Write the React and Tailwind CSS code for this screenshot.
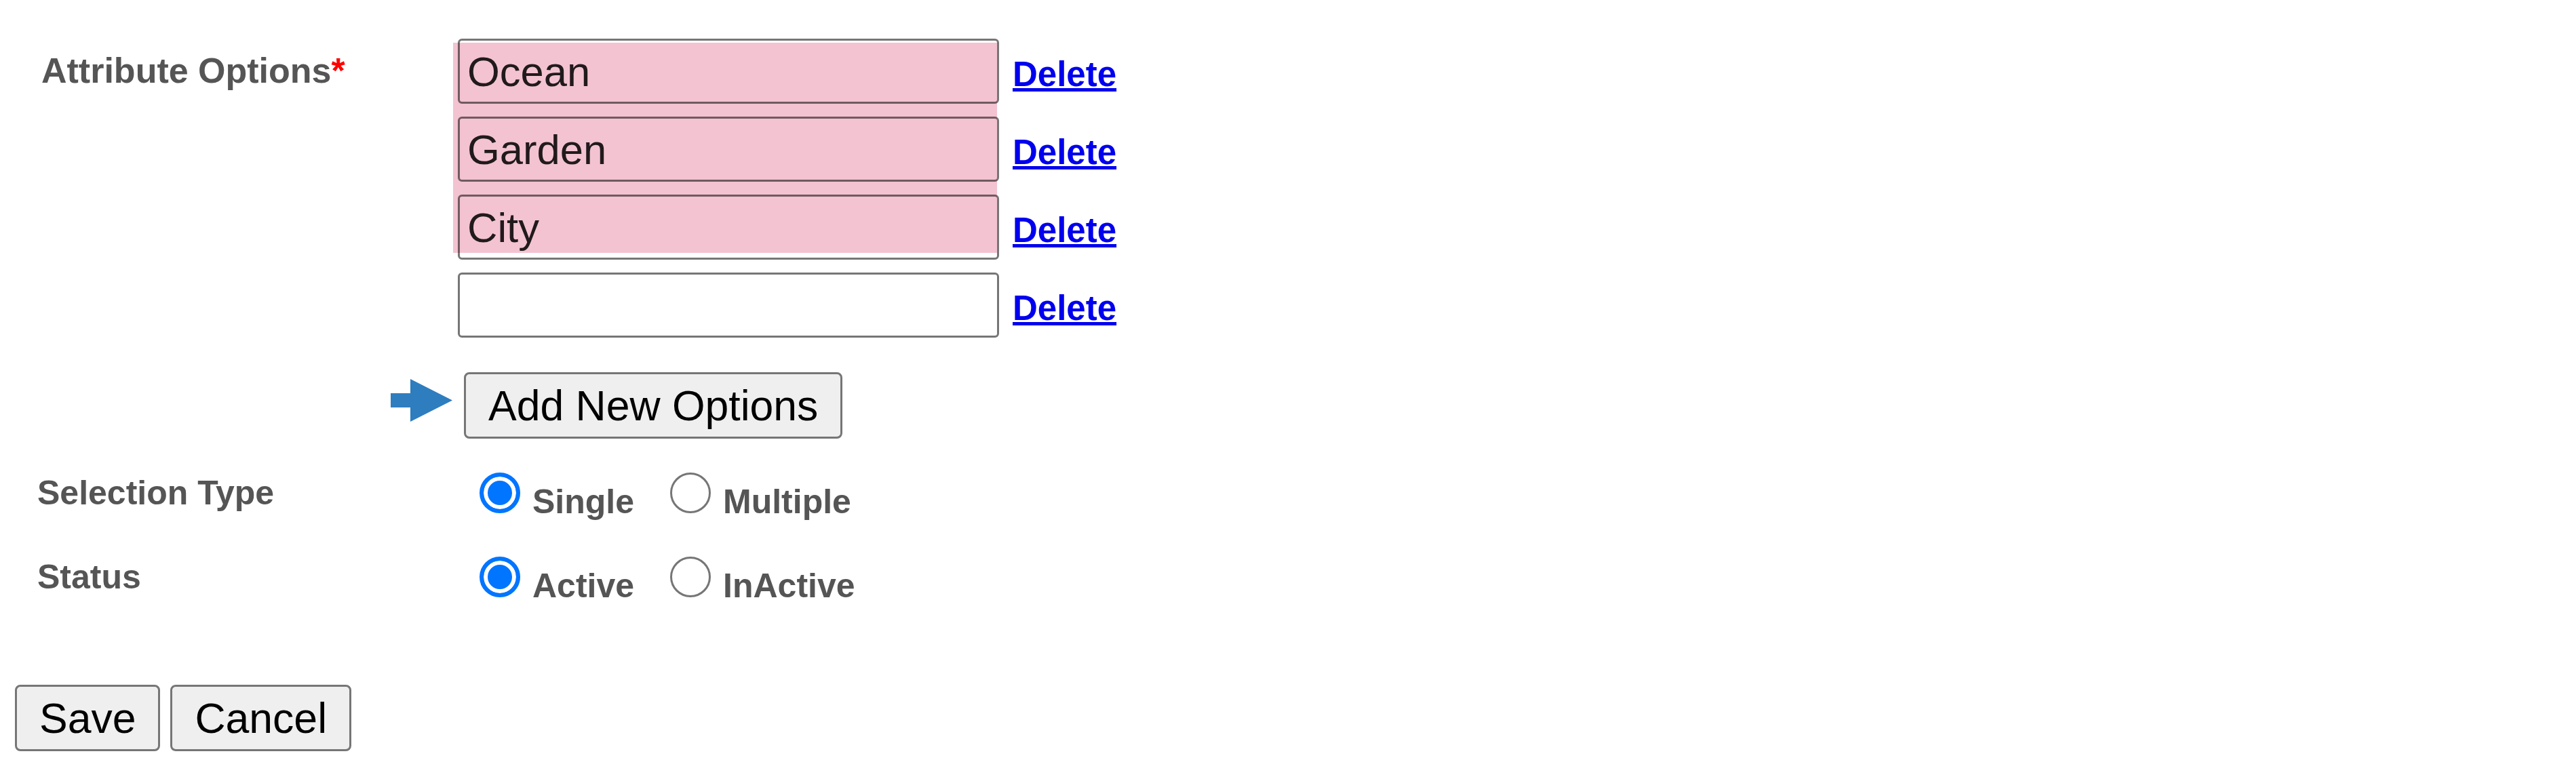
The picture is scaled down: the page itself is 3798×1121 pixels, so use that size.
import { useState } from 'react';

const OPTIONS = ['Ocean', 'Garden', 'City', ''];

function Arrow() {
  return (
    <svg width="91" height="63" viewBox="0 0 91 63" className="shrink-0 mt-[10px] mr-[17px]">
      <rect x="0" y="21" width="31" height="21" fill="#2e7dbf" />
      <polygon points="29,0 91,31.5 29,63" fill="#2e7dbf" />
    </svg>
  );
}

function Btn({ children }) {
  return (
    <button
      type="button"
      className="h-[98px] px-[33px] border-[3px] border-[#767676] rounded-[8px] bg-[#efefef] text-[62.5px] text-black leading-none"
    >
      {children}
    </button>
  );
}

function RadioGroup({ name, options, value, onChange }) {
  return (
    <div className="flex items-baseline">
      {options.map((opt, i) => (
        <label key={opt} className={`flex items-baseline ${i > 0 ? 'ml-[53px]' : ''}`}>
          <input
            type="radio"
            name={name}
            checked={value === opt}
            onChange={() => onChange(opt)}
            className="appearance-none w-[60px] h-[60px] m-0 shrink-0 rounded-full border-[3px] border-[#767676] bg-white checked:border-[6px] checked:border-[#0075ff] checked:bg-[#0075ff] checked:shadow-[inset_0_0_0_6px_#fff]"
          />
          <span className="ml-[18px] text-[50px] font-bold text-[#555]">{opt}</span>
        </label>
      ))}
    </div>
  );
}

export default function App() {
  const [options, setOptions] = useState(OPTIONS);
  const [selType, setSelType] = useState('Single');
  const [status, setStatus] = useState('Active');

  return (
    <div className="w-full h-[1121px] bg-white pt-[57px] font-['Liberation_Sans',Arial,sans-serif] overflow-hidden">
      {/* attribute options */}
      <div className="flex">
        <div className="w-[675px] shrink-0 pl-[61px] pt-[8px] text-[52px] font-bold text-[#555]">
          Attribute Options<span className="text-[#f00]">*</span>
        </div>
        <div className="relative flex flex-col gap-[19px]">
          {options.map((opt, i) => (
            <div key={i} className="flex items-baseline">
              <input
                type="text"
                value={opt}
                onChange={e => setOptions(o => o.map((v, j) => (j === i ? e.target.value : v)))}
                className="w-[798px] h-[96px] border-[3px] border-[#767676] rounded-[6px] bg-white pl-[11px] text-[61.5px] text-[#222] outline-none"
              />
              <a href="#" className="ml-[20px] text-[51px] font-bold text-[#0000ee] underline">
                Delete
              </a>
            </div>
          ))}
          {/* pink highlight over the filled rows */}
          <div className="absolute left-[-7px] top-[6px] w-[802px] h-[310px] bg-[#f3c3d1] mix-blend-multiply pointer-events-none" />
        </div>
      </div>

      <div className="flex items-start pl-[576px] mt-[51px]">
        <Arrow />
        <Btn>Add New Options</Btn>
      </div>

      <div className="flex items-start mt-[50px]">
        <div className="w-[707px] shrink-0 pl-[55px] -mt-[7px] text-[50px] font-bold text-[#555]">Selection Type</div>
        <RadioGroup name="seltype" options={['Single', 'Multiple']} value={selType} onChange={setSelType} />
      </div>

      <div className="flex items-start mt-[43px]">
        <div className="w-[707px] shrink-0 pl-[55px] -mt-[7px] text-[50px] font-bold text-[#555]">Status</div>
        <RadioGroup name="status" options={['Active', 'InActive']} value={status} onChange={setStatus} />
      </div>

      <div className="flex gap-[15px] pl-[22px] mt-[108px]">
        <Btn>Save</Btn>
        <Btn>Cancel</Btn>
      </div>
    </div>
  );
}
